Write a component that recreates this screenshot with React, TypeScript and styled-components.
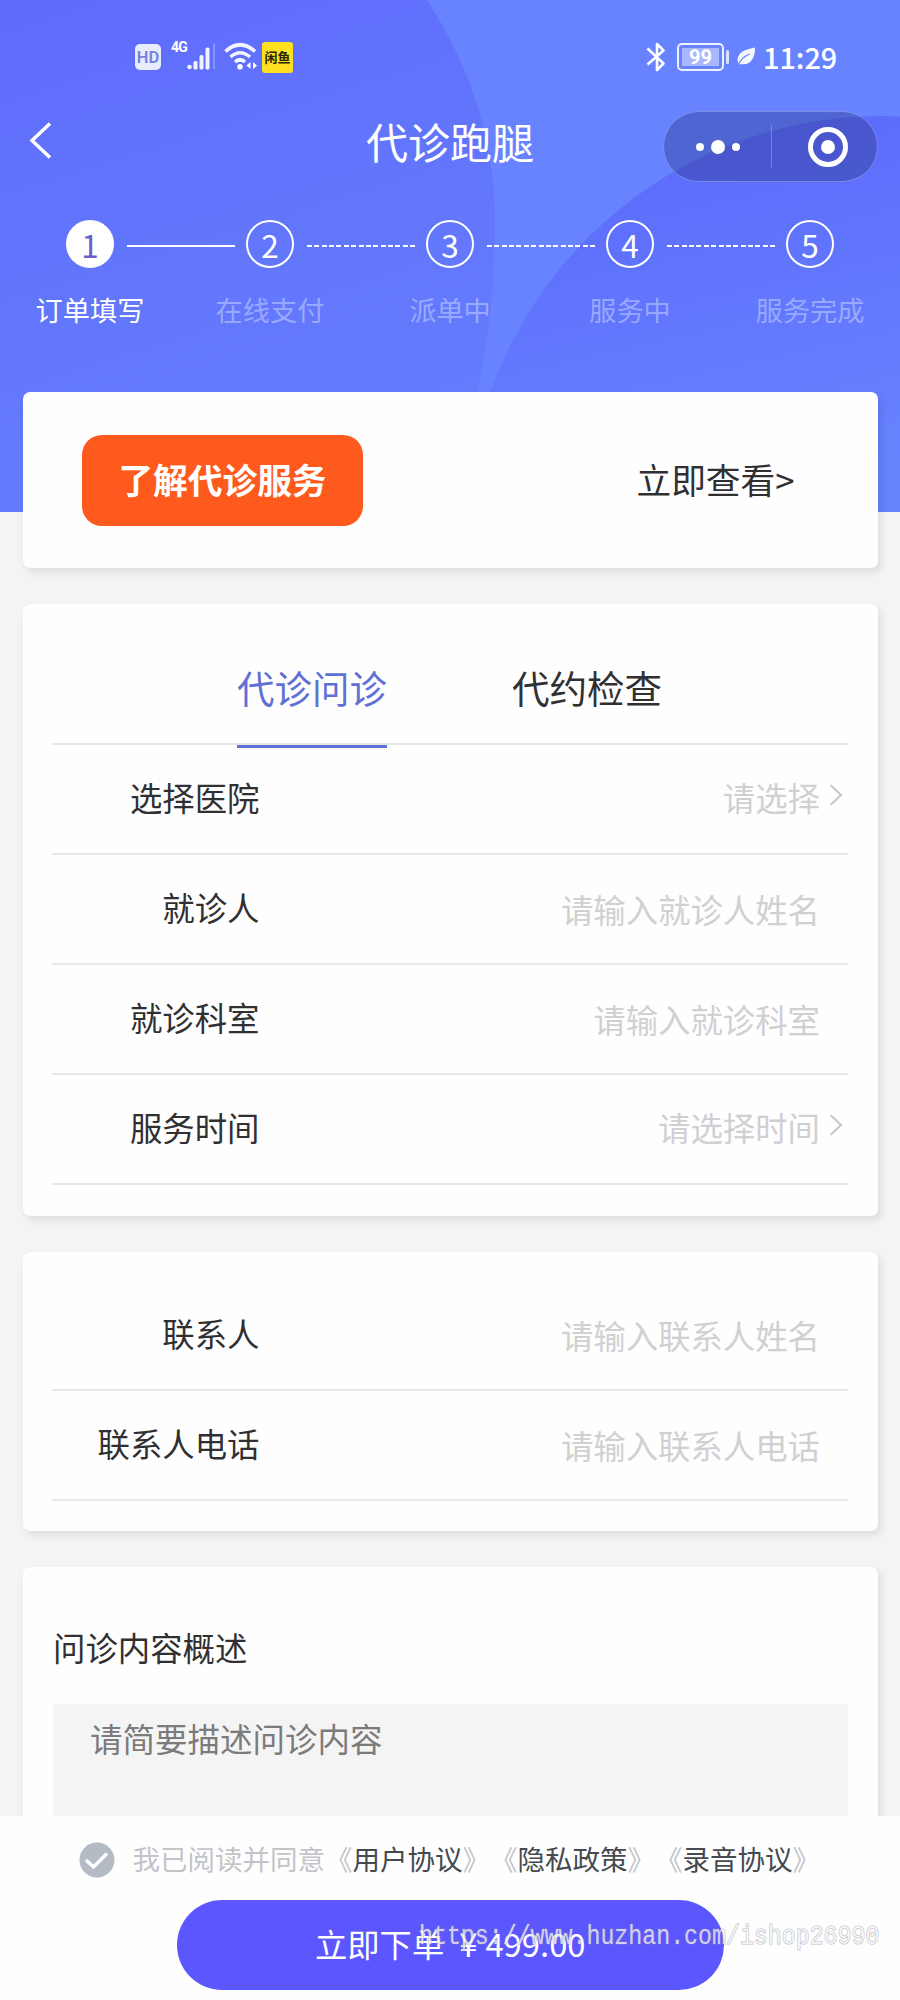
import React from 'react';
import styled, { createGlobalStyle, css } from 'styled-components';

const GlobalStyle = createGlobalStyle`
  * { box-sizing: border-box; }
  body {
    margin: 0;
    background: #f4f4f5;
    font-family: "Noto Sans CJK SC", "Noto Sans", sans-serif;
    color: #303032;
    text-spacing-trim: space-all;
  }
`;

const Page = styled.div`
  position: relative;
  display: flex;
  flex-direction: column;
  width: 900px;
  height: 2000px;
  overflow: hidden;
`;

const Header = styled.header`
  position: relative;
  flex: none;
  height: 512px;
  color: #fff;
`;

const Backdrop = styled.svg`
  position: absolute;
  inset: 0;
  z-index: -1;
`;

const StatusBar = styled.div`
  display: flex;
  justify-content: space-between;
  align-items: center;
  height: 112px;
  padding: 2px 62px 0 135px;
`;

const StatusGroup = styled.div`
  display: flex;
  align-items: center;
`;

const HdBadge = styled.span`
  width: 26px;
  height: 26px;
  border-radius: 5px;
  background: #e9ecff;
  color: #7480dc;
  font: 600 16.5px/27px Roboto, sans-serif;
  text-align: center;
`;

const Network = styled.span`
  align-self: flex-start;
  margin: -2px 0 0 10px;
  width: 16px;
  font: 700 14px/15px Roboto, sans-serif;
  letter-spacing: -0.8px;
`;

const Signal = styled.svg`
  margin-right: 7px;
`;

const AppBadge = styled.span`
  width: 31px;
  height: 31px;
  margin-left: 3px;
  border-radius: 3px;
  background: #ffe01e;
  color: #2a2508;
  font-size: 13px;
  font-weight: 700;
  line-height: 30px;
  text-align: center;
  white-space: nowrap;
`;

const Bluetooth = styled.svg`
  margin-right: 11px;
`;

const Battery = styled.span`
  display: flex;
  width: 47px;
  height: 28px;
  padding: 3px;
  border: 2px solid #eef1ff;
  border-radius: 5px;
`;

const BatteryLevel = styled.span`
  flex: 1;
  background: #a9b7ff;
  font: 700 20px/19px Roboto, sans-serif;
  text-align: center;
`;

const BatteryTip = styled.span`
  width: 3px;
  height: 14px;
  margin: 0 8px 0 2px;
  border-radius: 2px;
  background: #dfe4ff;
`;

const Clock = styled.span`
  margin-left: 7px;
  width: 75px;
  font-size: 28.8px;
  font-weight: 500;
  line-height: 32px;
  white-space: nowrap;
`;

const NavBar = styled.nav`
  display: grid;
  grid-template-columns: 1fr auto 1fr;
  align-items: center;
  height: 71px;
  padding: 0 22px 0 29px;
`;

const Title = styled.h1`
  margin: 0 0 14px -7px;
  font-size: 42px;
  font-weight: 400;
  line-height: 56px;
`;

const BackIcon = styled.svg`
  margin-bottom: 14px;
`;

const Capsule = styled.div`
  display: flex;
  justify-self: end;
  align-items: center;
  width: 215px;
  height: 71px;
  margin-top: -2px;
  border: 1.5px solid rgba(190, 202, 255, 0.4);
  border-radius: 36px;
  background: rgba(35, 45, 120, 0.34);
`;

const CapsuleHalf = styled.span`
  display: flex;
  flex: none;
  width: 107px;
  justify-content: center;
  align-items: center;
  gap: 7px;
  & + & {
    height: 43px;
    border-left: 1px solid rgba(190, 202, 255, 0.35);
    padding-left: 5px;
  }
`;

const Dot = styled.i<{ $size: number }>`
  width: ${(p) => p.$size}px;
  height: ${(p) => p.$size}px;
  border-radius: 50%;
  background: #fff;
`;

const Ring = styled.span`
  display: flex;
  justify-content: center;
  align-items: center;
  width: 40px;
  height: 40px;
  border: 5px solid #fff;
  border-radius: 50%;
`;

const StepTrack = styled.div`
  display: flex;
  align-items: center;
  height: 48px;
  margin-top: 37px;
  padding-left: 66px;
`;

const StepNumber = styled.span<{ $active?: boolean }>`
  flex: none;
  width: 48px;
  height: 48px;
  border: 2px solid #fff;
  border-radius: 50%;
  font-size: 31.5px;
  line-height: 44px;
  text-align: center;
  ${(p) =>
    p.$active &&
    css`
      background: #fff;
      color: #6a5fd0;
    `}
`;

const StepLine = styled.span<{ $solid?: boolean }>`
  flex: none;
  width: 108px;
  height: 2.5px;
  margin: 4px 11px 0 13px;
  background: ${(p) =>
    p.$solid ? '#fff' : 'repeating-linear-gradient(90deg, #fff 0 5px, transparent 5px 7.36px)'};
`;

const StepLabels = styled.div`
  display: grid;
  grid-template-columns: repeat(5, 180px);
  margin-top: 21px;
  font-size: 27.2px;
  line-height: 40px;
  text-align: center;
`;

const StepLabel = styled.span<{ $active?: boolean }>`
  color: ${(p) => (p.$active ? '#fff' : 'rgba(190, 202, 255, 0.62)')};
`;

const Content = styled.main`
  position: relative;
  display: flex;
  flex-direction: column;
  flex: 1;
  gap: 36px;
  min-height: 0;
  margin-top: -120px;
  padding: 0 22.5px;
  overflow: hidden;
`;

const Card = styled.section<{ $height: number; $top?: number }>`
  flex: none;
  height: ${(p) => p.$height}px;
  padding: ${(p) => p.$top ?? 0}px 29.5px 0;
  border-radius: 7px;
  background: #fefefe;
  box-shadow: 3px 4px 9px rgba(0, 0, 0, 0.1);
`;

const IntroCard = styled(Card)`
  display: flex;
  justify-content: space-between;
  align-items: center;
  padding: 0 83px 0 59.5px;
`;

const IntroButton = styled.button`
  width: 281px;
  height: 91px;
  padding: 0 0 2px;
  border: 0;
  border-radius: 20px;
  background: #ff5a1d;
  color: #fff;
  font: 700 34.7px/89px "Noto Sans CJK SC", sans-serif;
`;

const IntroLink = styled.a`
  font-size: 34.7px;
  line-height: 50px;
  padding-bottom: 2px;
`;

const Tabs = styled.div`
  display: flex;
  gap: 125px;
  height: 141px;
  padding: 58px 0 0 185px;
  border-bottom: 2px solid #e5e5e7;
`;

const Tab = styled.span<{ $active?: boolean }>`
  height: 86px;
  font-size: 37.5px;
  line-height: 50px;
  color: ${(p) => (p.$active ? '#5f71d4' : 'inherit')};
  border-bottom: ${(p) => (p.$active ? '3px solid #5f71d4' : '0')};
`;

const Row = styled.label`
  display: flex;
  align-items: center;
  height: 110px;
  padding-bottom: 4px;
  border-bottom: 2px solid #e7e7e8;
  font-size: 32.4px;
  line-height: 48px;
`;

const RowLabel = styled.span`
  width: 207.5px;
  text-align: right;
`;

const Placeholder = styled.span<{ $drop: number }>`
  flex: 1;
  padding-top: ${(p) => p.$drop}px;
  color: #d0d0d3;
  text-align: right;
`;

const RowEnd = styled.span`
  display: flex;
  align-items: center;
  width: 28px;
  height: 48px;
  padding: 0 0 5px 9px;
`;

const SummaryTitle = styled.h2`
  margin: 0;
  padding: 56px 0 33px 1px;
  font-size: 32.4px;
  font-weight: 400;
  line-height: 48px;
`;

const SummaryBox = styled.div`
  height: 240px;
  margin-left: 1px;
  padding: 10px 37px;
  border-radius: 4px;
  background: #f4f4f4;
  color: #7b7b7b;
  font-size: 32.5px;
  line-height: 48px;
`;

const BottomBar = styled.footer`
  position: relative;
  display: flex;
  flex-direction: column;
  flex: none;
  height: 184px;
  background: #fefefe;
`;

const Agreement = styled.div`
  display: flex;
  align-items: center;
  height: 84px;
  padding: 3px 0 0 79px;
  color: #c3c4c9;
  font-size: 27.5px;
  line-height: 40px;
  white-space: nowrap;
`;

const AgreementText = styled.span`
  margin-left: 17.5px;
  padding-bottom: 4px;
`;

const AgreementLink = styled.a`
  color: #454a50;
`;

const OrderButton = styled.button`
  display: flex;
  justify-content: flex-start;
  align-items: center;
  width: 547px;
  height: 90px;
  margin-left: 177px;
  padding: 0 0 5px 138px;
  border: 0;
  border-radius: 45px;
  background: #5c56ff;
  color: #fff;
  font: 400 32.3px/48px "Noto Sans CJK SC", sans-serif;
`;

const Price = styled.span`
  display: flex;
  gap: 8px;
  margin-left: 15px;
  font-size: 32.8px;
`;

const Watermark = styled.span`
  position: absolute;
  top: 107px;
  left: 419px;
  color: rgba(255, 255, 255, 0.7);
  font: 400 23.25px/28px "Liberation Mono", monospace;
  -webkit-text-stroke: 1px rgba(140, 140, 155, 0.6);
  paint-order: stroke;
  transform: scaleY(1.15);
  white-space: nowrap;
`;

const steps = ['订单填写', '在线支付', '派单中', '服务中', '服务完成'];

type Field = { label: string; hint: string; picker?: boolean };

const visitFields: Field[] = [
  { label: '选择医院', hint: '请选择', picker: true },
  { label: '就诊人', hint: '请输入就诊人姓名' },
  { label: '就诊科室', hint: '请输入就诊科室' },
  { label: '服务时间', hint: '请选择时间', picker: true },
];

const contactFields: Field[] = [
  { label: '联系人', hint: '请输入联系人姓名' },
  { label: '联系人电话', hint: '请输入联系人电话' },
];

const agreements = ['用户协议', '隐私政策', '录音协议'];

const HeaderBackdrop = () => (
  <Backdrop width="900" height="512" viewBox="0 0 900 512">
    <defs>
      <linearGradient id="left" x1="0" y1="0" x2="0.3" y2="1">
        <stop offset="0" stopColor="#5f6afd" />
        <stop offset="0.4" stopColor="#6174fc" />
        <stop offset="1" stopColor="#657cfd" />
      </linearGradient>
      <linearGradient id="right" gradientUnits="userSpaceOnUse" x1="720" y1="120" x2="800" y2="480">
        <stop offset="0" stopColor="#5c6afb" />
        <stop offset="1" stopColor="#6784ff" />
      </linearGradient>
    </defs>
    <rect width="900" height="512" fill="#6783ff" />
    <path d="M0 0H427C470 66 495 140 495 220C495 290 487 350 477 391C464 440 440 480 410 512H0Z" fill="url(#left)" />
    <circle cx="882" cy="532" r="416" fill="url(#right)" />
  </Backdrop>
);

const SignalIcon = () => (
  <Signal width="30" height="26" viewBox="0 0 30 26" fill="#f1f3ff">
    <circle cx="2.5" cy="23" r="2.3" />
    <rect x="6.5" y="17" width="4" height="8.5" rx="1.5" />
    <rect x="12.5" y="11" width="4" height="14.5" rx="1.5" />
    <rect x="18.5" y="3.5" width="4" height="22" rx="1.5" />
    <rect x="26" y="0" width="2" height="25" fill="#8796ff" />
  </Signal>
);

const WifiIcon = () => (
  <svg width="35" height="30" viewBox="0 0 35 30" fill="none" stroke="#f4f6ff" strokeWidth="3.6">
    <path d="M1.5 9.5Q16 -4 31 9.5" />
    <path d="M6.5 15Q16 6.5 26 15" />
    <path d="M11 20Q16 15.5 21 20" />
    <circle cx="16" cy="24.8" r="2.8" fill="#fff" stroke="none" />
    <path d="M26.5 20v7l-4-3.5zM29 20v7l4-3.5z" fill="#fff" stroke="none" />
  </svg>
);

const BluetoothIcon = () => (
  <Bluetooth width="20" height="30" viewBox="0 0 20 30" fill="none" stroke="#fff" strokeWidth="2.6">
    <path d="M1.5 6.5L17.5 21.5L11 28V2L17.5 8.5L1.5 22.5" strokeLinejoin="round" />
  </Bluetooth>
);

const LeafIcon = () => (
  <svg width="19" height="20" viewBox="0 0 19 20">
    <path d="M18 0.5C8 2.5 1 5 0.5 13L1.5 18L4 17C13 19 18.5 11 18 0.5Z" fill="#f4f6ff" />
    <path d="M1 18.5Q4 10.5 12.5 7" fill="none" stroke="#6783ff" strokeWidth="1.3" />
  </svg>
);

const FieldRow = ({ label, hint, picker }: Field) => (
  <Row>
    <RowLabel>{label}</RowLabel>
    <Placeholder $drop={picker ? 0 : 3}>{hint}</Placeholder>
    <RowEnd>
      {picker && (
        <svg width="14" height="22" viewBox="0 0 14 22" fill="none" stroke="#c8c8cc" strokeWidth="2">
          <path d="M1.5 1L12 11L1.5 21" />
        </svg>
      )}
    </RowEnd>
  </Row>
);

export default function App() {
  return (
    <Page>
      <GlobalStyle />
      <Header>
        <HeaderBackdrop />
        <StatusBar>
          <StatusGroup>
            <HdBadge>HD</HdBadge>
            <Network>4G</Network>
            <SignalIcon />
            <WifiIcon />
            <AppBadge>闲鱼</AppBadge>
          </StatusGroup>
          <StatusGroup>
            <BluetoothIcon />
            <Battery>
              <BatteryLevel>99</BatteryLevel>
            </Battery>
            <BatteryTip />
            <LeafIcon />
            <Clock>11:29</Clock>
          </StatusGroup>
        </StatusBar>
        <NavBar>
          <BackIcon width="23" height="37" viewBox="0 0 23 37" fill="none" stroke="#fff" strokeWidth="3.4">
            <path d="M21 1.5L3 18.5L21 35.5" />
          </BackIcon>
          <Title>代诊跑腿</Title>
          <Capsule>
            <CapsuleHalf>
              <Dot $size={8} />
              <Dot $size={14} />
              <Dot $size={8} />
            </CapsuleHalf>
            <CapsuleHalf>
              <Ring>
                <Dot $size={14} />
              </Ring>
            </CapsuleHalf>
          </Capsule>
        </NavBar>
        <StepTrack>
          {steps.map((name, i) => (
            <React.Fragment key={name}>
              {i > 0 && <StepLine $solid={i === 1} />}
              <StepNumber $active={i === 0}>{i + 1}</StepNumber>
            </React.Fragment>
          ))}
        </StepTrack>
        <StepLabels>
          {steps.map((name, i) => (
            <StepLabel key={name} $active={i === 0}>
              {name}
            </StepLabel>
          ))}
        </StepLabels>
      </Header>

      <Content>
        <IntroCard $height={176}>
          <IntroButton>了解代诊服务</IntroButton>
          <IntroLink>立即查看&gt;</IntroLink>
        </IntroCard>

        <Card $height={612}>
          <Tabs>
            <Tab $active>代诊问诊</Tab>
            <Tab>代约检查</Tab>
          </Tabs>
          {visitFields.map((f) => (
            <FieldRow key={f.label} {...f} />
          ))}
        </Card>

        <Card $height={279} $top={29}>
          {contactFields.map((f) => (
            <FieldRow key={f.label} {...f} />
          ))}
        </Card>

        <Card $height={420}>
          <SummaryTitle>问诊内容概述</SummaryTitle>
          <SummaryBox>请简要描述问诊内容</SummaryBox>
        </Card>
      </Content>

      <BottomBar>
        <Agreement>
          <svg width="36" height="36" viewBox="0 0 36 36" fill="none">
            <circle cx="18" cy="18" r="17.5" fill="#b4bbc3" />
            <path d="M7 18L14.5 25L28 11.5" stroke="#fff" strokeWidth="3.4" />
          </svg>
          <AgreementText>
            我已阅读并同意
            {agreements.map((name) => (
              <React.Fragment key={name}>
                《<AgreementLink>{name}</AgreementLink>》
              </React.Fragment>
            ))}
          </AgreementText>
        </Agreement>
        <OrderButton>
          立即下单
          <Price>
            <span>¥</span>
            <span>499.00</span>
          </Price>
        </OrderButton>
        <Watermark>https://www.huzhan.com/ishop26990</Watermark>
      </BottomBar>
    </Page>
  );
}
